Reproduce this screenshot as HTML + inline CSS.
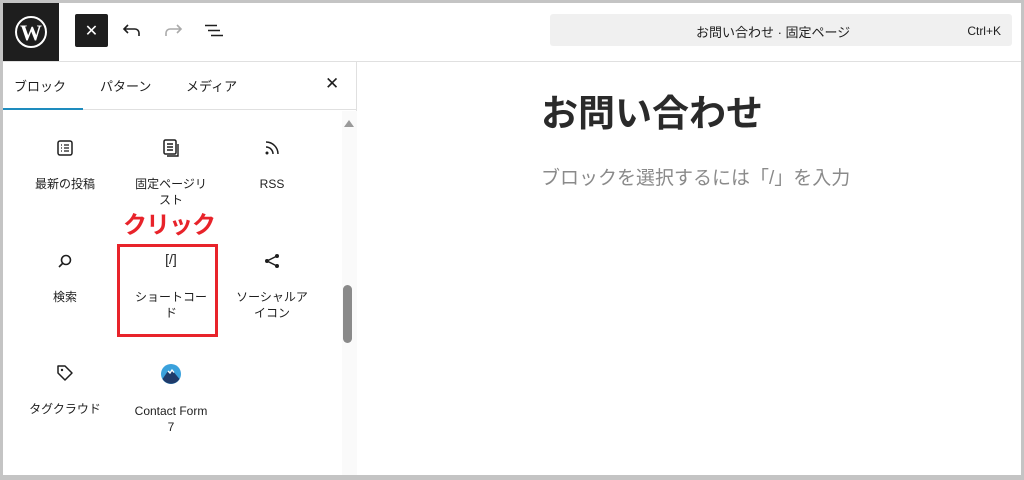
<!DOCTYPE html>
<html><head><meta charset="utf-8"><style>
*{margin:0;padding:0;box-sizing:border-box}
body{width:1024px;height:480px;background:#c4c4c4;font-family:"Liberation Sans","Noto Sans CJK JP",sans-serif;color:#1e1e1e;position:relative;overflow:hidden}
.frame{position:absolute;left:3px;top:3px;width:1018px;height:472px;background:#fff;overflow:hidden}
.logo{position:absolute;left:0;top:0;width:56px;height:58px;background:#1e1e1e;display:flex;align-items:center;justify-content:center}
.topbar{position:absolute;left:0;top:58px;width:100%;height:1px;background:#e0e0e0}
.xbtn{position:absolute;left:72px;top:11px;width:33px;height:33px;background:#1e1e1e;border-radius:2px;color:#fff;font-size:16px;display:flex;align-items:center;justify-content:center}
.search{position:absolute;left:547px;top:11px;width:462px;height:32px;background:#f0f0f0;border-radius:3px;font-size:13px;color:#1e1e1e}
.side{position:absolute;left:0;top:59px;width:354px;height:413px;border-right:1px solid #e0e0e0}
.tabs{height:48px;border-bottom:1px solid #e0e0e0;position:relative;font-size:13px}
.tabs span{position:absolute;top:14px}
.item{position:absolute;width:100px;text-align:center;font-size:12px;line-height:16px;color:#1e1e1e}
.item svg{display:block;margin:0 auto 18px}
</style></head><body>
<div class="frame">
<div class="logo"><svg width="34" height="34" viewBox="0 0 34 34"><circle cx="17" cy="17" r="15" fill="none" stroke="#fff" stroke-width="2"/><text x="17" y="25" font-family="Liberation Serif" font-size="22" font-weight="bold" fill="#fff" text-anchor="middle">W</text></svg></div>
<div class="xbtn">✕</div>
<svg style="position:absolute;left:119px;top:19px" width="20" height="16" viewBox="0 0 20 16"><path d="M6 3 L2 7 L6 11 M2 7 H13 a4 4 0 0 1 4 4 V14" fill="none" stroke="#1e1e1e" stroke-width="1.6"/></svg>
<svg style="position:absolute;left:160px;top:19px" width="20" height="16" viewBox="0 0 20 16"><path d="M14 3 L18 7 L14 11 M18 7 H7 a4 4 0 0 0 -4 4 V14" fill="none" stroke="#aaa" stroke-width="1.6"/></svg>
<svg style="position:absolute;left:201px;top:21px" width="20" height="14" viewBox="0 0 20 14"><path d="M1 1.5H13M4 6.5H16M7 11.5H19" stroke="#1e1e1e" stroke-width="1.6"/></svg>
<div class="search"><span style="position:absolute;left:146px;top:8px">お問い合わせ · 固定ページ</span><span style="position:absolute;right:11px;top:10px;font-size:12px">Ctrl+K</span></div>
<div class="topbar"></div>
<div class="side">
<div class="tabs"><span style="left:11px">ブロック</span><span style="left:97px">パターン</span><span style="left:183px">メディア</span><span style="left:322px;top:12px;font-size:17px">✕</span>
<div style="position:absolute;left:0;bottom:-1px;width:80px;height:2px;background:#1e8cbe"></div></div>
<div style="position:absolute;left:339px;top:49px;width:15px;height:364px;background:#fafafa"></div>
<div style="position:absolute;left:341px;top:58px;width:0;height:0;border-left:5px solid transparent;border-right:5px solid transparent;border-bottom:7px solid #9a9a9a"></div>
<div style="position:absolute;left:340px;top:223px;width:9px;height:58px;background:#8a8a8a;border-radius:5px"></div>
<div class="item" style="left:12px;top:76px"><svg width="20" height="20" viewBox="0 0 20 20"><rect x="3" y="3" width="14" height="14" rx="2" fill="none" stroke="#1e1e1e" stroke-width="1.5"/><path d="M6 7h1M9 7h5M6 10h1M9 10h5M6 13h1M9 13h5" stroke="#1e1e1e" stroke-width="1.3"/></svg>最新の投稿</div>
<div class="item" style="left:118px;top:76px"><svg width="20" height="20" viewBox="0 0 20 20"><rect x="3" y="2" width="12" height="14" rx="1.5" fill="none" stroke="#1e1e1e" stroke-width="1.5"/><path d="M6 6h6M6 9h6M6 12h6M17 6v12H6" fill="none" stroke="#1e1e1e" stroke-width="1.4"/></svg>固定ページリ<br>スト</div>
<div class="item" style="left:219px;top:76px"><svg width="20" height="20" viewBox="0 0 20 20"><path d="M4 9a7 7 0 0 1 7 7M4 4a12 12 0 0 1 12 12" fill="none" stroke="#1e1e1e" stroke-width="1.5"/><circle cx="5" cy="15" r="1.5" fill="#1e1e1e"/></svg>RSS</div>
<div style="position:absolute;left:120px;top:143px;color:#e8232a;font-size:24px;font-weight:bold;letter-spacing:-1px">クリック</div>
<div style="position:absolute;left:114px;top:182px;width:101px;height:93px;border:3px solid #e8232a"></div>
<div class="item" style="left:12px;top:189px"><svg width="20" height="20" viewBox="0 0 20 20"><circle cx="11" cy="9" r="4.5" fill="none" stroke="#1e1e1e" stroke-width="1.6"/><path d="M8 12L4 16" stroke="#1e1e1e" stroke-width="1.6"/></svg>検索</div>
<div class="item" style="left:118px;top:189px"><div style="height:20px;font-size:14px;margin-bottom:18px">[/]</div>ショートコー<br>ド</div>
<div class="item" style="left:219px;top:189px"><svg width="20" height="20" viewBox="0 0 20 20"><circle cx="15" cy="5" r="2" fill="#1e1e1e"/><circle cx="5" cy="10" r="2" fill="#1e1e1e"/><circle cx="15" cy="15" r="2" fill="#1e1e1e"/><path d="M15 5L5 10L15 15" fill="none" stroke="#1e1e1e" stroke-width="1.5"/></svg>ソーシャルア<br>イコン</div>
<div class="item" style="left:12px;top:301px"><svg width="20" height="20" viewBox="0 0 20 20"><path d="M3 3h7l7 7-7 7-7-7z" fill="none" stroke="#1e1e1e" stroke-width="1.5" stroke-linejoin="round"/><circle cx="7" cy="7" r="1.2" fill="#1e1e1e"/></svg>タグクラウド</div>
<div class="item" style="left:118px;top:301px"><svg width="22" height="22" viewBox="0 0 22 22"><circle cx="11" cy="11" r="10" fill="#3aa1dc"/><path d="M2.5 16L8 8l2 2 2-3 7.5 9A10 10 0 0 1 2.5 16z" fill="#1f3b6a"/><path d="M8 8l2 2 2-3 2 2.5" fill="none" stroke="#fff" stroke-width="1.4"/></svg>Contact Form<br>7</div>
</div>
<div style="position:absolute;left:538px;top:80px;font-size:37px;font-weight:bold;color:#2a2a2a">お問い合わせ</div>
<div style="position:absolute;left:538px;top:160px;font-size:19px;color:#8a8a8a">ブロックを選択するには「/」を入力</div>
</div>
</body></html>
